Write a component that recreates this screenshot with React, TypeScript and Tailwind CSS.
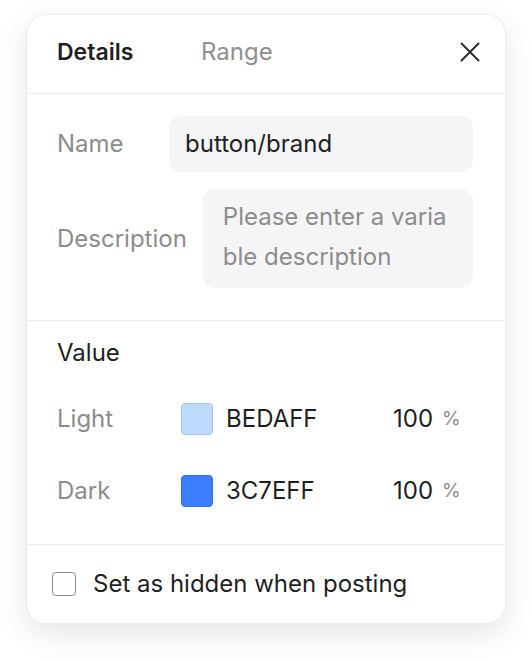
import React from 'react'

const XIcon = () => (
    <svg width="20" height="20" viewBox="0 0 20 20" fill="none">
        <path d="M1.5 1.5L18.5 18.5M18.5 1.5L1.5 18.5" stroke="#2b2b2b" strokeWidth="1.9" strokeLinecap="round"/>
    </svg>
)

const ColorRow = ({label, hex, swatch}: {label: string, hex: string, swatch: string}) => (
    <div className="h-[72px] flex items-center">
        <span className="w-[124px] text-[#8c8c8c]">{label}</span>
        <span className={`w-[32px] h-[32px] rounded-[4px] border ${swatch}`}/>
        <span className="ml-[13px] w-[167px] text-[#1f1f1f]">{hex}</span>
        <span className="text-[#1f1f1f]">100</span>
        <span className="ml-[9px] text-[19px] text-[#8c8c8c]">%</span>
    </div>
)

export default function App() {
    return (
        <div className="min-h-screen bg-white pt-[14px] pl-[26px] font-['Inter','Liberation_Sans',sans-serif] text-[24px] leading-[30px]">
            <div className="w-[480px] bg-white border border-[#ececec] rounded-[20px] shadow-[0_10px_30px_rgba(0,0,0,0.10)] flex flex-col">
                {/* Tabs */}
                <div className="h-[79px] pb-1 pl-[30px] pr-[25px] flex items-center border-b border-[#ededed]">
                    <span className="w-[144px] font-semibold text-[23px] text-[#1f1f1f]">Details</span>
                    <span className="text-[#8f8f8f]">Range</span>
                    <button className="ml-auto"><XIcon/></button>
                </div>

                {/* Name / Description */}
                <div className="pt-[22px] pb-[32px] pl-[30px] pr-[32px] flex flex-col gap-[17px] border-b border-[#ededed]">
                    <div className="flex items-center">
                        <span className="w-[112px] text-[#8c8c8c]">Name</span>
                        <div className="flex-1 h-[56px] rounded-[12px] bg-[#f5f5f7] pl-[16px] flex items-center text-[#1f1f1f]">
                            button/brand
                        </div>
                    </div>
                    <div className="flex items-center gap-[16px]">
                        <span className="text-[#8c8c8c]">Description</span>
                        <div className="flex-1 h-[99px] rounded-[12px] bg-[#f5f5f7] pl-[20px] pr-[26px] pt-[8px] leading-[40px] text-[#8c8c8c] break-all">
                            Please enter a variable description
                        </div>
                    </div>
                </div>

                {/* Value */}
                <div className="pt-[17px] pb-[17px] pl-[30px] pr-[32px] border-b border-[#ededed]">
                    <div className="text-[#1f1f1f]">Value</div>
                    <div className="mt-[15px]">
                        <ColorRow label="Light" hex="BEDAFF" swatch="bg-[#bedaff] border-[#a6c6f2]"/>
                        <ColorRow label="Dark" hex="3C7EFF" swatch="bg-[#3c7eff] border-[#3170ea]"/>
                    </div>
                </div>

                {/* Footer */}
                <div className="h-[78px] pl-[25px] flex items-center">
                    <span className="w-[24px] h-[24px] rounded-[4px] border-[1.5px] border-[#8a8a8a]"/>
                    <span className="ml-[17px] text-[#1f1f1f]">Set as hidden when posting</span>
                </div>
            </div>
        </div>
    )
}
